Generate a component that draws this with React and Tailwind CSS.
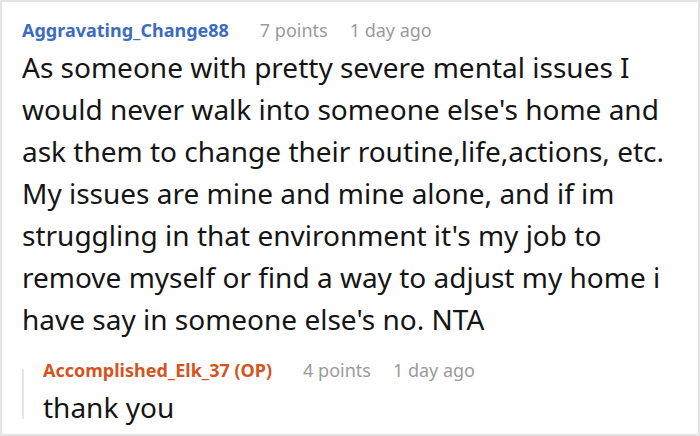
import React from 'react';

const font = { fontFamily: '"Noto Sans", "Open Sans", sans-serif' };

const bodyLines = [
  'As someone with pretty severe mental issues I',
  "would never walk into someone else's home and",
  'ask them to change their routine,life,actions, etc.',
  'My issues are mine and mine alone, and if im',
  "struggling in that environment it's my job to",
  'remove myself or find a way to adjust my home i',
  "have say in someone else's no. NTA",
];

// Header row: author name, points and age
const CommentMeta = ({ author, points, age, nameClass }) => (
  <div className="flex items-baseline text-[18px] leading-[24px]">
    <span className={`font-bold ${nameClass}`}>{author}</span>
    <span className="ml-[31px] text-[#9a9a9a]">{points}</span>
    <span className="ml-[22px] text-[#9a9a9a]">{age}</span>
  </div>
);

const App = () => {
  return (
    <div
      className="w-[700px] h-[436px] bg-white border-2 border-[#e4e4e4] pl-[20px] pt-[16px] overflow-hidden"
      style={font}
    >
      <CommentMeta
        author="Aggravating_Change88"
        points="7 points"
        age="1 day ago"
        nameClass="text-[#3b6cbd]"
      />
      <p className="mt-[4px] text-[28px] leading-[42px] text-[#151515] whitespace-nowrap">
        {bodyLines.map((line, i) => (
          <React.Fragment key={i}>
            {line}
            {i < bodyLines.length - 1 && <br />}
          </React.Fragment>
        ))}
      </p>

      {/* Reply */}
      <div className="flex mt-[18px]">
        <div className="w-[2px] h-[50px] mt-[11px] bg-[#e6e6e6] shrink-0" />
        <div className="ml-[19px]">
          <CommentMeta
            author="Accomplished_Elk_37 (OP)"
            points="4 points"
            age="1 day ago"
            nameClass="text-[#d4531f]"
          />
          <p className="mt-[4px] text-[28px] leading-[42px] text-[#151515]">thank you</p>
        </div>
      </div>
    </div>
  );
};

export default App;
